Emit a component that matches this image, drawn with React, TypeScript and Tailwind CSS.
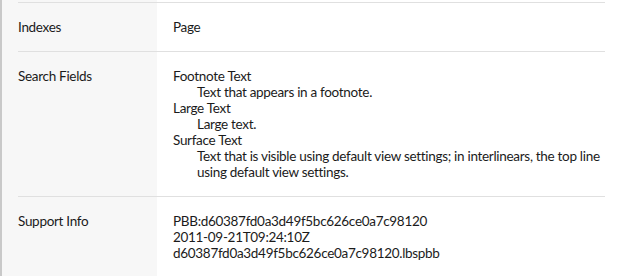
const rows: { label: string; content: React.ReactNode }[] = [
  { label: 'Indexes', content: <div>Page</div> },
  {
    label: 'Search Fields',
    content: (
      <dl>
        <dt>Footnote Text</dt>
        <dd className="pl-6">Text that appears in a footnote.</dd>
        <dt>Large Text</dt>
        <dd className="pl-6">Large text.</dd>
        <dt>Surface Text</dt>
        <dd className="pl-6">
          Text that is visible using default view settings; in interlinears, the top line using default view settings.
        </dd>
      </dl>
    ),
  },
  {
    label: 'Support Info',
    content: (
      <div>
        <div>PBB:d60387fd0a3d49f5bc626ce0a7c98120</div>
        <div>2011-09-21T09:24:10Z</div>
        <div>d60387fd0a3d49f5bc626ce0a7c98120.lbspbb</div>
      </div>
    ),
  },
];

function InfoRow({ label, content }: { label: string; content: React.ReactNode }) {
  return (
    <div className="flex border-t border-[#e0e0e0] py-4">
      <div className="w-[155px] shrink-0">{label}</div>
      <div className="flex-1">{content}</div>
    </div>
  );
}

export default function App() {
  return (
    <div
      className="min-h-[276px] w-[626px] border-l-2 border-[#c9c9c9] bg-[linear-gradient(to_right,#f7f7f7_155px,#ffffff_155px)] pt-[2px] text-[13.5px] leading-4 tracking-[-0.3px] text-[#1b1b1b]"
      style={{ fontFamily: 'Lato, "Liberation Sans", sans-serif' }}
    >
      <div className="ml-4 mr-[21px]">
        {rows.map((r) => (
          <InfoRow key={r.label} label={r.label} content={r.content} />
        ))}
      </div>
    </div>
  );
}
